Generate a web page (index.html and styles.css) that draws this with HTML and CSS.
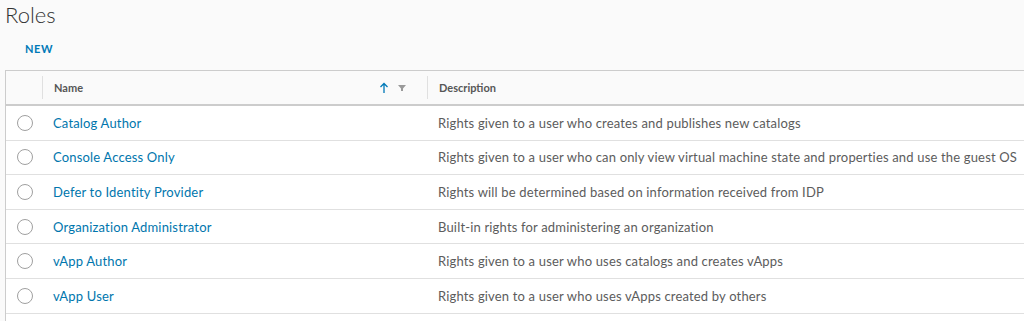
FILE: index.html
```html
<!DOCTYPE html>
<html lang="en">
<head>
    <meta charset="UTF-8">
    <title>Roles</title>
    <link rel="stylesheet" href="styles.css">
</head>
<body>
    <h1 class="page-title">Roles</h1>
    <div class="toolbar">
        <button class="btn-link">NEW</button>
    </div>

    <div class="datagrid">
        <div class="dg-row dg-header">
            <div class="dg-cell dg-select"></div>
            <div class="dg-cell dg-name">
                <span class="col-title">Name</span>
                <span class="col-icons">
                    <svg class="sort-icon" width="10" height="12" viewBox="0 0 10 12"><path d="M5 11V1.5M1.5 5L5 1.5 8.5 5" fill="none" stroke="#0079b8" stroke-width="1.3"/></svg>
                    <svg class="filter-icon" width="10" height="10" viewBox="0 0 10 10"><path d="M1 2h8L6 5.5V8H4V5.5z" fill="#9a9a9a"/></svg>
                </span>
            </div>
            <div class="dg-cell dg-desc"><span class="col-title">Description</span></div>
        </div>

        <div class="dg-row">
            <div class="dg-cell dg-select"><span class="radio"></span></div>
            <div class="dg-cell dg-name"><a href="#">Catalog Author</a></div>
            <div class="dg-cell dg-desc">Rights given to a user who creates and publishes new catalogs</div>
        </div>
        <div class="dg-row">
            <div class="dg-cell dg-select"><span class="radio"></span></div>
            <div class="dg-cell dg-name"><a href="#">Console Access Only</a></div>
            <div class="dg-cell dg-desc">Rights given to a user who can only view virtual machine state and properties and use the guest OS</div>
        </div>
        <div class="dg-row">
            <div class="dg-cell dg-select"><span class="radio"></span></div>
            <div class="dg-cell dg-name"><a href="#">Defer to Identity Provider</a></div>
            <div class="dg-cell dg-desc">Rights will be determined based on information received from IDP</div>
        </div>
        <div class="dg-row">
            <div class="dg-cell dg-select"><span class="radio"></span></div>
            <div class="dg-cell dg-name"><a href="#">Organization Administrator</a></div>
            <div class="dg-cell dg-desc">Built-in rights for administering an organization</div>
        </div>
        <div class="dg-row">
            <div class="dg-cell dg-select"><span class="radio"></span></div>
            <div class="dg-cell dg-name"><a href="#">vApp Author</a></div>
            <div class="dg-cell dg-desc">Rights given to a user who uses catalogs and creates vApps</div>
        </div>
        <div class="dg-row">
            <div class="dg-cell dg-select"><span class="radio"></span></div>
            <div class="dg-cell dg-name"><a href="#">vApp User</a></div>
            <div class="dg-cell dg-desc">Rights given to a user who uses vApps created by others</div>
        </div>
    </div>
</body>
</html>
```

FILE: styles.css
```css
body { margin: 0; background-color: #fafafa; font-family: Lato, "Noto Sans", sans-serif; color: #565656; overflow: hidden; }
.page-title { margin: 0; padding: 1px 0 0 5px; height: 29px; font-size: 22px; font-weight: 300; line-height: 28px; color: #313131; }
.toolbar { height: 40px; display: flex; align-items: center; padding-left: 19px; box-sizing: border-box; padding-bottom: 3px; }
.btn-link { background: none; border: none; padding: 0 6px; font-family: inherit; font-size: 11px; font-weight: 700; letter-spacing: 0.6px; color: #0079b8; cursor: pointer; }
.datagrid { margin-left: 5px; width: 1040px; padding-bottom: 20px; border: 1px solid #ccc; border-right: none; background-color: #fff; }
.dg-row { display: grid; grid-template-columns: 36px 385px 1fr; height: 33.6px; border-bottom: 1px solid #e0e0e0; align-items: center; font-size: 13px; letter-spacing: 0.17px; }
.dg-header { height: 33px; background-color: #fafafa; border-bottom: 2px solid #ccc; letter-spacing: 0; }
.dg-cell { padding: 0 11px; height: 100%; display: flex; align-items: center; white-space: nowrap; box-sizing: border-box; }
.dg-select { padding: 0; justify-content: center; }
.dg-header .dg-name, .dg-header .dg-desc { border-left: 1px solid #e0e0e0; height: 23px; }
.dg-desc { padding-left: 11px; color: #5c5c5c; }
.col-title { font-size: 11px; font-weight: 700; color: #565656; }
.col-icons { margin-left: auto; display: flex; align-items: center; gap: 8px; padding-right: 9px; }
.radio { width: 14px; height: 14px; border: 1px solid #a0a0a0; border-radius: 50%; background-color: #fff; margin-left: 1px; }
a { color: #0076ad; text-decoration: none; }
```
